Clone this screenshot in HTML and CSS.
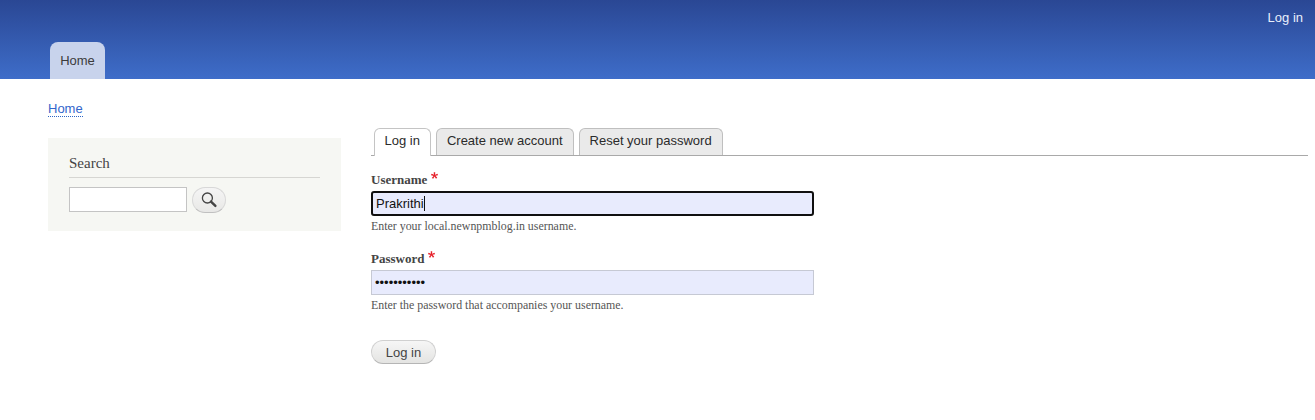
FILE: index.html
```html
<!DOCTYPE html>
<html lang="en">
<head>
<meta charset="utf-8">
<title>Log in</title>
<link rel="stylesheet" href="styles.css">
</head>
<body>
<header class="site-header">
  <div class="secondary-nav"><a href="#" class="secondary-link">Log in</a></div>
  <nav class="primary-nav"><a href="#" class="primary-tab">Home</a></nav>
</header>
<div class="page">
  <div class="breadcrumb"><a href="#" class="crumb">Home</a></div>
  <div class="columns">
    <aside class="sidebar">
      <div class="search-block">
        <h2 class="block-title">Search</h2>
        <form class="search-form">
          <input class="search-input" type="search" aria-label="Search">
          <button class="search-button" type="button" aria-label="Search">
            <svg width="18" height="18" viewBox="0 0 18 18" class="search-icon"><circle cx="7.400" cy="7" r="5" fill="none" stroke="#444" stroke-width="1.300"/><path d="M11 10.600 L15.400 14.900" stroke="#444" stroke-width="2.400" stroke-linecap="round"/></svg>
          </button>
        </form>
      </div>
    </aside>
    <main class="content">
      <ul class="tabs">
        <li class="tab tab-active"><a href="#" class="tab-link">Log in</a></li>
        <li class="tab"><a href="#" class="tab-link">Create new account</a></li>
        <li class="tab"><a href="#" class="tab-link">Reset your password</a></li>
      </ul>
      <form class="login-form">
        <div class="form-item">
          <label class="form-label">Username<svg class="req" width="7" height="7" viewBox="0 0 16 16"><path fill="#e6202a" d="M0 7.600l1.100-3.400c2.600.9 4.400 1.700 5.600 2.300C6.400 3.600 6.200 1.500 6.200.4h3.500c0 1.200-.2 3.200-.4 6 1.700-.8 3.600-1.600 5.700-2.300l1.100 3.400c-2 .7-4 1.100-6 1.300 1 .9 2.400 2.400 4.200 4.600l-2.900 2.100c-.9-1.300-2-3-3.300-5.100-1.200 2.200-2.200 3.900-3.100 5.100L1.800 13.500c1.900-2.300 3.200-3.800 4-4.600C3.700 8.500 1.800 8.100 0 7.600z"/></svg></label>
          <div class="text-field text-field-focus">Prakrithi<span class="caret"></span></div>
          <div class="hint">Enter your local.newnpmblog.in username.</div>
        </div>
        <div class="form-item">
          <label class="form-label">Password<svg class="req" width="7" height="7" viewBox="0 0 16 16"><path fill="#e6202a" d="M0 7.600l1.100-3.400c2.600.9 4.400 1.700 5.600 2.300C6.400 3.600 6.200 1.500 6.200.4h3.500c0 1.200-.2 3.200-.4 6 1.700-.8 3.600-1.600 5.700-2.300l1.100 3.400c-2 .7-4 1.100-6 1.300 1 .9 2.400 2.400 4.200 4.600l-2.900 2.100c-.9-1.300-2-3-3.300-5.100-1.200 2.200-2.200 3.900-3.100 5.100L1.800 13.500c1.900-2.300 3.200-3.800 4-4.600C3.700 8.500 1.800 8.100 0 7.600z"/></svg></label>
          <input class="text-field" type="password" value="Prakrithi12" aria-label="Password">
          <div class="hint">Enter the password that accompanies your username.</div>
        </div>
        <button class="submit" type="button">Log in</button>
      </form>
    </main>
  </div>
</div>
</body>
</html>
```
FILE: styles.css
```css
* { box-sizing: border-box; }
html, body { margin: 0; padding: 0; }
body {
  background: #fff;
  color: #3b3b3b;
  font-family: "Liberation Serif", serif;
  font-size: 12px;
  height: 420px;
  overflow: hidden;
}
.site-header {
  height: 79px;
  background: linear-gradient(to bottom, #2a4794 0%, #3e6dc9 100%);
  display: flex;
  flex-direction: column;
  font-family: "Liberation Sans", sans-serif;
  font-size: 13px;
}
.secondary-nav {
  height: 42px;
  display: flex;
  justify-content: flex-end;
  padding: 10px 12px 0 0;
}
.secondary-link { color: #e9effc; text-decoration: none; line-height: 15px; }
.primary-nav { padding-left: 50px; }
.primary-tab {
  display: block;
  width: 55px;
  height: 37px;
  background: #c8d3ec;
  border-radius: 8px 8px 0 0;
  color: #3b3b3b;
  text-decoration: none;
  text-align: center;
  line-height: 37px;
}
.page { padding: 22px 7px 0 48px; }
.breadcrumb {
  height: 37px;
  font-family: "Liberation Sans", sans-serif;
  font-size: 13px;
  line-height: 15px;
}
.crumb { color: #3366cc; text-decoration: none; border-bottom: 1px dotted #2e66c5; }
.columns { display: flex; align-items: flex-start; }
.sidebar { width: 293px; flex: none; }
.search-block {
  height: 93px;
  background: #f6f7f3;
  padding: 17px 21px 0;
}
.block-title {
  margin: 0 0 9px;
  font-size: 15px;
  font-weight: 400;
  line-height: 17px;
  height: 23px;
  border-bottom: 1px solid #d6d6d2;
  color: #444;
}
.search-form { display: flex; align-items: flex-start; gap: 5px; }
.search-input {
  width: 118px;
  height: 25px;
  border: 1px solid #c4c4c4;
  background: #fff;
  margin: 0;
  padding: 0;
  border-radius: 0;
  appearance: none;
}
.search-button {
  width: 34px;
  height: 26px;
  border: 1px solid #d8d8d8;
  border-bottom-color: #c0c0c0;
  border-radius: 13px;
  background: linear-gradient(to bottom, #f5f5f5, #e8e8e6);
  padding: 0;
  margin: 0;
  display: flex;
  align-items: center;
  justify-content: center;
}
.search-icon { display: block; }
.content { flex: 1; margin-top: -10px; }
.tabs {
  list-style: none;
  margin: 0 0 0 30px;
  padding: 0 0 0 3px;
  height: 28px;
  display: flex;
  gap: 5px;
  border-bottom: 1px solid #a9a9a9;
  font-family: "Liberation Sans", sans-serif;
  font-size: 13px;
}
.tab {
  height: 27px;
  background: #eaeaea;
  border: 1px solid #bfbfbf;
  border-bottom: 0;
  border-radius: 6px 6px 0 0;
  padding: 0 10.5px 0 9.5px;
  line-height: 24px;
}
.tab-active { height: 28px; background: #fff; border-color: #c4c4c4; }
.tab-link { color: #2b2b2b; text-decoration: none; }
.login-form { margin-left: 30px; padding-top: 14px; }
.form-item { margin-bottom: 16px; width: 443px; }
.form-label {
  display: block;
  font-weight: 700;
  font-size: 13px;
  line-height: 15px;
  height: 21px;
  padding-top: 2px;
  color: #444;
}
.req {
  margin-left: 4px;
  vertical-align: 5px;
}
.text-field {
  display: block;
  width: 443px;
  height: 25px;
  margin: 0 0 3px;
  padding: 0 3px;
  background: #e8ebfd;
  border: 1px solid #c6c9d4;
  border-radius: 0;
  color: #111;
  font-family: "Liberation Sans", sans-serif;
  font-size: 13px;
  line-height: 23px;
}
.text-field-focus {
  border: 2px solid #101010;
  border-radius: 3px;
  padding: 0 3px;
  line-height: 21px;
}
.caret {
  display: inline-block;
  width: 1px;
  height: 15px;
  background: #111;
  vertical-align: -3px;
}
.hint { font-size: 11.9px; line-height: 14px; color: #555; }
.submit {
  display: block;
  margin-top: 28px;
  width: 65px;
  height: 24px;
  border: 1px solid #d0d0d0;
  border-bottom-color: #b5b5b5;
  border-radius: 12px;
  background: linear-gradient(to bottom, #f6f6f6, #e4e4e2);
  color: #444;
  font-family: "Liberation Sans", sans-serif;
  font-size: 13px;
  padding: 0;
}
```
